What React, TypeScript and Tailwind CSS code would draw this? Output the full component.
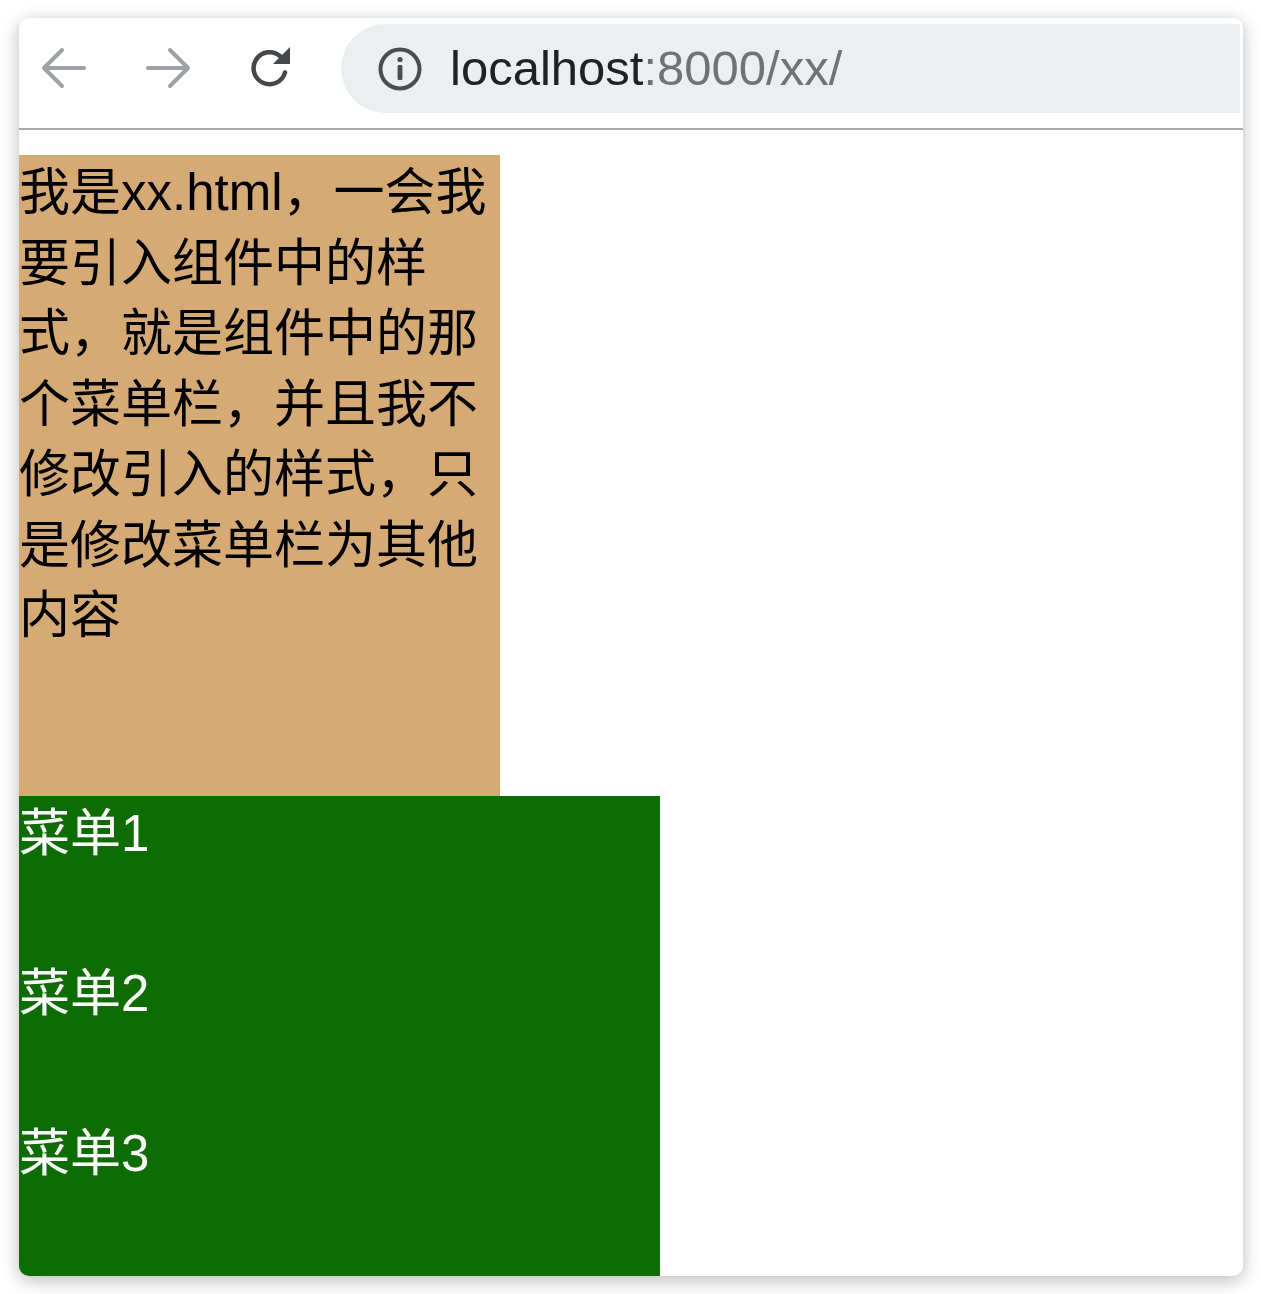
import * as React from "react";

const cjk = { fontFamily: '"Liberation Sans", "Noto Sans CJK SC", sans-serif' };

function BackIcon() {
  return (
    <svg width="46" height="42" viewBox="0 0 46 42" fill="none" stroke="#9ea1a5" strokeWidth="4" strokeLinecap="round" strokeLinejoin="round">
      <path d="M43 21H4" />
      <path d="M21 3L3 21l18 18" />
    </svg>
  );
}

function ForwardIcon() {
  return (
    <svg width="46" height="42" viewBox="0 0 46 42" fill="none" stroke="#9ea1a5" strokeWidth="4" strokeLinecap="round" strokeLinejoin="round">
      <path d="M3 21h39" />
      <path d="M25 3l18 18-18 18" />
    </svg>
  );
}

function ReloadIcon() {
  return (
    <svg width="46" height="46" viewBox="0 0 46 46" fill="none">
      <path d="M38 27.5A16 16 0 1 1 33.5 11.5" stroke="#45484b" strokeWidth="4.5" strokeLinecap="round" />
      <path d="M43 2v17H26z" fill="#45484b" />
    </svg>
  );
}

function InfoIcon() {
  return (
    <svg width="46" height="46" viewBox="0 0 46 46" fill="none">
      <circle cx="23" cy="23" r="19.5" stroke="#4a4c50" strokeWidth="4" />
      <circle cx="23" cy="13.5" r="2.6" fill="#4a4c50" />
      <rect x="20.6" y="19" width="4.8" height="15" rx="1" fill="#4a4c50" />
    </svg>
  );
}

export default function App() {
  return (
    <div className="min-h-[1294px] w-[1262px] bg-white pl-[19px] pt-[18px]">
      <div className="flex h-[1258px] w-[1224px] flex-col overflow-hidden rounded-[10px] bg-white shadow-[0_4px_18px_rgba(0,0,0,0.28)]">
        {/* toolbar */}
        <div className="flex h-[112px] shrink-0 items-start border-b-2 border-[#a9aaab] pr-[3px]">
          <div className="flex h-[100px] items-center pl-[22px]">
            <BackIcon />
            <div className="w-[58px]" />
            <ForwardIcon />
            <div className="w-[56px]" />
            <ReloadIcon />
          </div>
          <div className="ml-[48px] mt-[6px] flex h-[89px] flex-1 items-center rounded-l-[45px] bg-[#ebeff0] pl-[36px]">
            <InfoIcon />
            <span className="ml-[27px] text-[49px] text-[#202124]" style={{ fontFamily: '"Liberation Sans", sans-serif' }}>
              localhost<span className="text-[#6f7377]">:8000/xx/</span>
            </span>
          </div>
        </div>

        {/* page */}
        <div className="flex-1 pt-[25px]">
          <div className="h-[641px] w-[481px] bg-[#d6aa74] pt-[3px] text-[51px] leading-[70.5px] text-black" style={cjk}>
            我是xx.html，一会我要引入组件中的样式，就是组件中的那个菜单栏，并且我不修改引入的样式，只是修改菜单栏为其他内容
          </div>
          <div className="flex h-[480px] w-[641px] flex-col gap-[90px] bg-[#0e6c04] pt-[3px] text-[51px] leading-[70px] text-white" style={cjk}>
            <div>菜单1</div>
            <div>菜单2</div>
            <div>菜单3</div>
          </div>
        </div>
      </div>
    </div>
  );
}
